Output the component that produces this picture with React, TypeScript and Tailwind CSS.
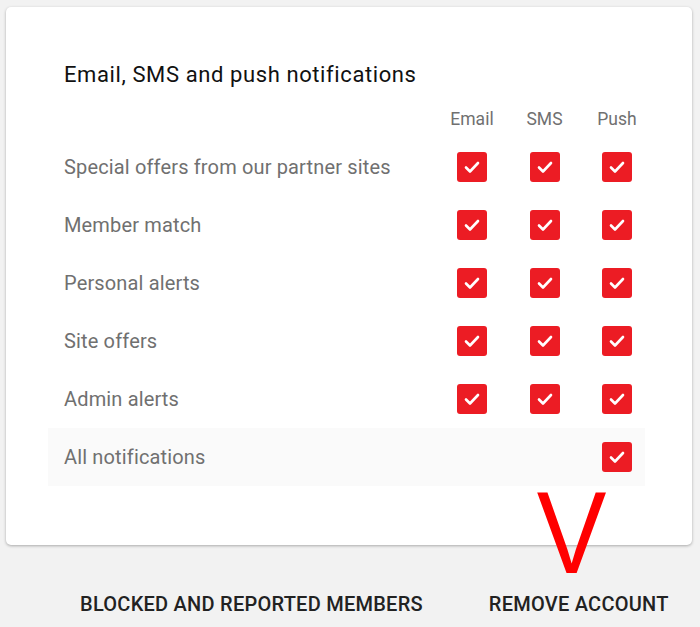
const rows = [
  { label: 'Special offers from our partner sites', email: true, sms: true, push: true },
  { label: 'Member match', email: true, sms: true, push: true },
  { label: 'Personal alerts', email: true, sms: true, push: true },
  { label: 'Site offers', email: true, sms: true, push: true },
  { label: 'Admin alerts', email: true, sms: true, push: true },
  { label: 'All notifications', email: false, sms: false, push: true, shaded: true },
]

function Check() {
  return (
    <span className="flex h-[30px] w-[30px] items-center justify-center rounded-[3px] bg-[#ec1c24]">
      <svg width="18" height="18" viewBox="0 0 18 18" fill="none">
        <path d="M3 9.5l4 4 8-8.5" stroke="white" strokeWidth="2.6" strokeLinecap="round" strokeLinejoin="round" />
      </svg>
    </span>
  )
}

function Cell({ on }: { on: boolean }) {
  return <div className="flex w-[56px] justify-center">{on && <Check />}</div>
}

export default function App() {
  return (
    <div className="relative h-[627px] w-[700px] overflow-hidden bg-[#f2f2f2] font-['Roboto',sans-serif]">
      <div className="pt-[7px] pl-[6px] pr-[8px]">
        <div className="rounded-[5px] bg-white pt-[54px] pb-[59px] pl-[42px] pr-[47px] shadow-[0_1px_3px_rgba(0,0,0,0.3)]">
          <h2 className="pl-4 text-[22px] leading-[28px] tracking-[0.6px] text-[#111]">
            Email, SMS and push notifications
          </h2>

          <div className="mt-5 flex justify-end gap-[16.5px] text-[17.5px] leading-5 text-[#707070]">
            <div className="w-[56px] text-center">Email</div>
            <div className="w-[56px] text-center">SMS</div>
            <div className="w-[56px] text-center">Push</div>
          </div>

          <div className="mt-[9px]">
            {rows.map((row) => (
              <div
                key={row.label}
                className={`flex h-[58px] items-center pl-4 ${row.shaded ? 'bg-[#fafafa]' : ''}`}
              >
                <span className="flex-1 text-[20px] tracking-[0.15px] text-[#707070]">{row.label}</span>
                <div className="flex gap-[16.5px]">
                  <Cell on={row.email} />
                  <Cell on={row.sms} />
                  <Cell on={row.push} />
                </div>
              </div>
            ))}
          </div>
        </div>
      </div>

      <div className="mt-[47px] flex gap-[66px] pl-[80px] text-[20px] font-medium leading-6 tracking-[0.25px] text-[#222]">
        <button>BLOCKED AND REPORTED MEMBERS</button>
        <button>REMOVE ACCOUNT</button>
      </div>

      <span className="absolute left-[533px] top-[475px] scale-x-[0.9] font-['Liberation_Sans',sans-serif] text-[116px] leading-none text-[#ff0000]">
        V
      </span>
    </div>
  )
}
